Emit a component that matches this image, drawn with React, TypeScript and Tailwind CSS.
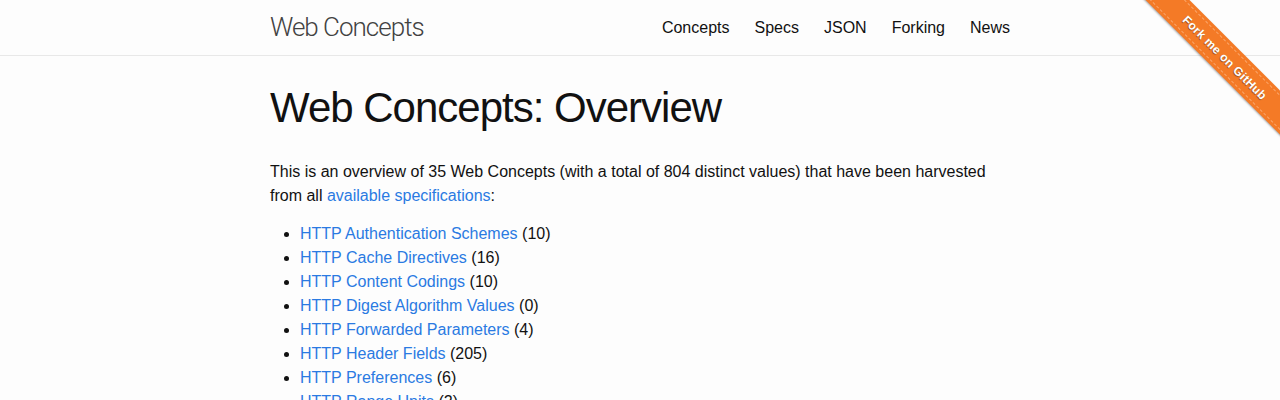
import React from 'react';

const concepts: [string, number][] = [
    ['HTTP Authentication Schemes', 10],
    ['HTTP Cache Directives', 16],
    ['HTTP Content Codings', 10],
    ['HTTP Digest Algorithm Values', 0],
    ['HTTP Forwarded Parameters', 4],
    ['HTTP Header Fields', 205],
    ['HTTP Preferences', 6],
    ['HTTP Range Units', 2],
    ['HTTP Status Codes', 62],
];

const navItems = ['Concepts', 'Specs', 'JSON', 'Forking', 'News'];

const ForkRibbon: React.FC = () => (
    <div className="absolute top-0 right-0 w-[150px] h-[150px] overflow-hidden pointer-events-none">
        <div className="absolute left-[-5px] top-[42px] w-[200px] h-[31px] rotate-45 bg-[#f47a26] shadow-[0_1px_2px_rgba(0,0,0,0.35)] flex items-center justify-center">
            <div className="w-full h-[25px] border-y border-dashed border-[#fbb07a]/80 flex items-center justify-center">
                <span className="text-white text-[12px] font-bold tracking-[0.3px] [text-shadow:0_1px_1px_rgba(0,0,0,0.4)]">
                    Fork me on GitHub
                </span>
            </div>
        </div>
    </div>
);

const App: React.FC = () => {
    return (
        <div className="min-h-[400px] bg-[#fdfdfd] text-[#111] font-['Liberation_Sans',Arial,sans-serif] text-[16px] leading-[24px] relative">
            <header className="border-b border-[#e8e8e8] h-[56px]">
                <div className="w-[740px] mx-auto flex items-center justify-between h-[55px]">
                    <a className="font-['Roboto',sans-serif] font-light text-[26px] tracking-[-1px] text-[#424242] leading-[55px]">
                        Web Concepts
                    </a>
                    <nav className="flex gap-[25px] text-[#111]">
                        {navItems.map((n) => (
                            <a key={n}>{n}</a>
                        ))}
                    </nav>
                </div>
            </header>
            <main className="w-[740px] mx-auto pt-[28px]">
                <h1 className="text-[42px] leading-[48px] tracking-[-1px] mb-[28px]">Web Concepts: Overview</h1>
                <p className="mb-[14px]">
                    This is an overview of 35 Web Concepts (with a total of 804 distinct values) that have been harvested
                    from all <a className="text-[#2a7ae2]">available specifications</a>:
                </p>
                <ul className="list-disc ml-[30px]">
                    {concepts.map(([name, count]) => (
                        <li key={name}>
                            <a className="text-[#2a7ae2]">{name}</a> ({count})
                        </li>
                    ))}
                </ul>
            </main>
            <ForkRibbon />
        </div>
    );
};

export default App;
